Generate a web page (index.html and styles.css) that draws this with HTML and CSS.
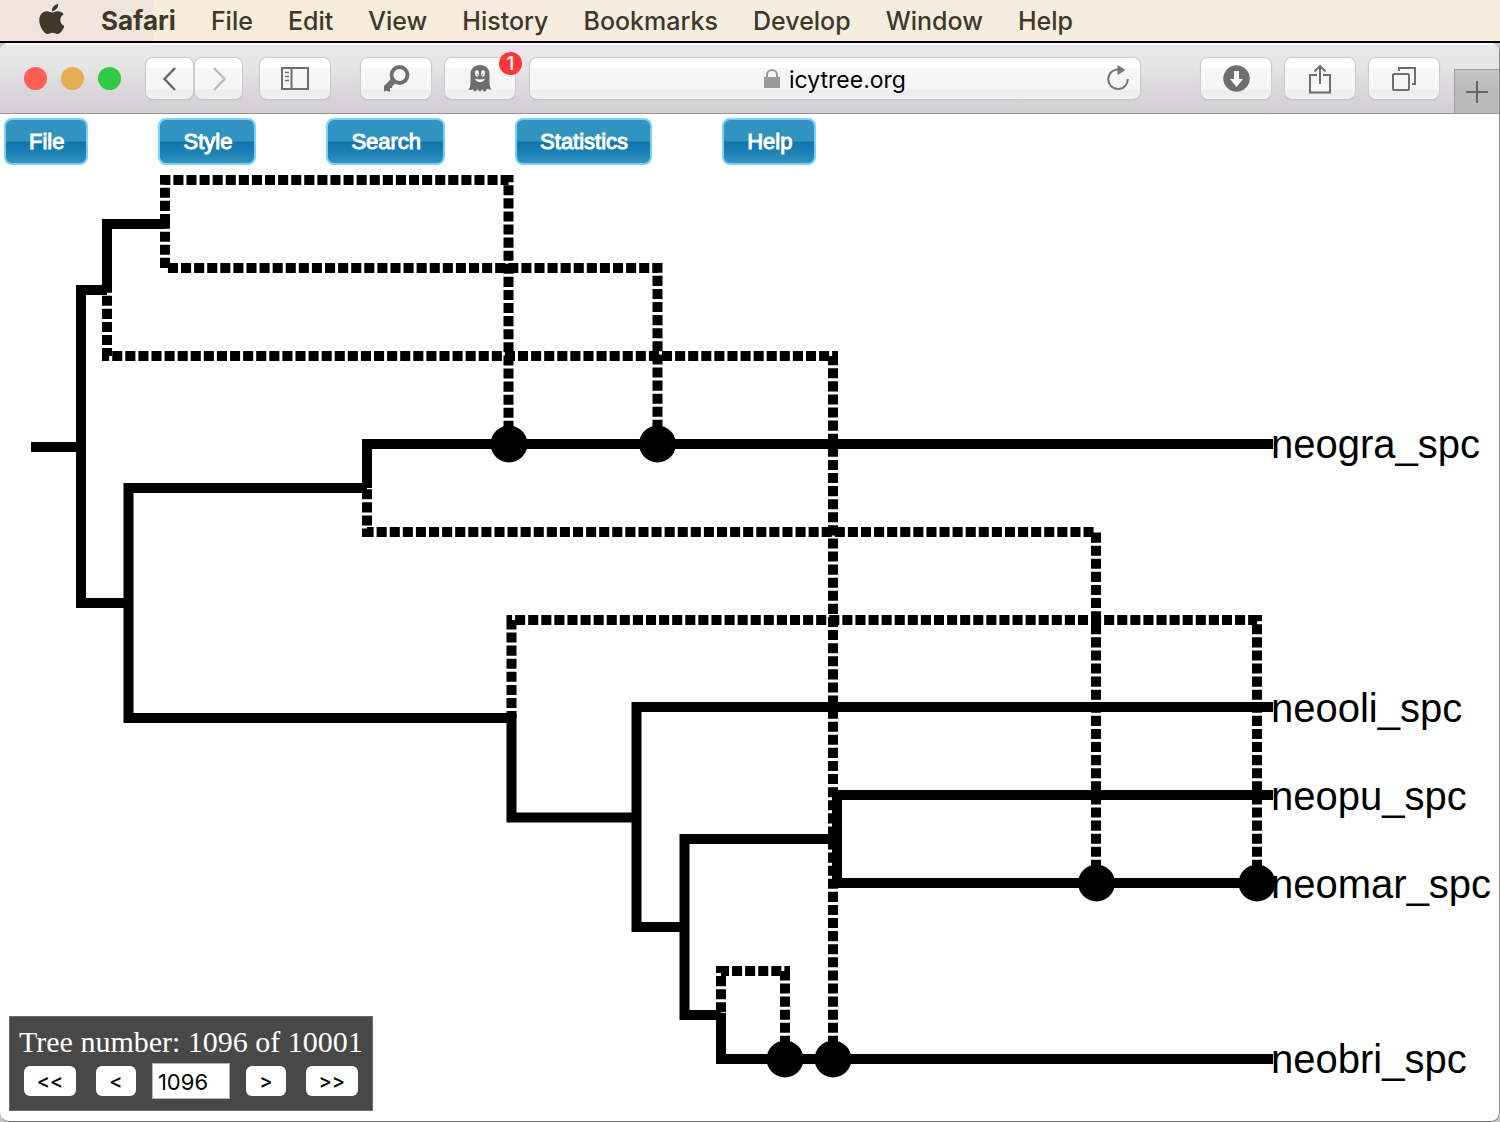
FILE: index.html
```html
<!DOCTYPE html>
<html lang="en">
<head>
<meta charset="utf-8">
<title>IcyTree</title>
<link rel="stylesheet" href="styles.css">
</head>
<body>
<nav class="menubar" aria-label="System menu">
  <svg class="apple" viewBox="4 32 365 448" aria-hidden="true"><path d="M318.7 268.7c-.2-36.7 16.4-64.4 50-84.8-18.8-26.9-47.2-41.7-84.7-44.6-35.5-2.8-74.3 20.7-88.5 20.7-15 0-49.4-19.7-76.4-19.7C63.3 141.2 4 184.8 4 273.5q0 39.3 14.4 81.2c12.8 36.7 59 126.7 107.2 125.2 25.2-.6 43-17.9 75.8-17.9 31.8 0 48.3 17.9 76.4 17.9 48.6-.7 90.4-82.5 102.6-119.3-65.2-30.7-61.7-90-61.7-91.9zm-56.6-164.2c27.3-32.4 24.8-61.9 24-72.5-24.1 1.4-52 16.4-67.9 34.9-17.5 19.8-27.8 44.3-25.6 71.9 26.1 2 49.9-11.4 69.5-34.3z"/></svg>
  <a class="app" href="#">Safari</a>
  <a href="#">File</a>
  <a href="#">Edit</a>
  <a href="#">View</a>
  <a href="#">History</a>
  <a href="#">Bookmarks</a>
  <a href="#">Develop</a>
  <a href="#">Window</a>
  <a href="#">Help</a>
</nav>
<div class="window">
  <header class="toolbar">
    <div class="lights"><span class="light red"></span><span class="light amber"></span><span class="light green"></span></div>
    <div class="history">
      <button class="tool nav" aria-label="Back"><svg width="46" height="40" viewBox="0 0 46 40"><path d="M28 9 17.500 20 28 31" fill="none" stroke="#6a6a6a" stroke-width="2.500"/></svg></button>
      <button class="tool nav" aria-label="Forward"><svg width="46" height="40" viewBox="0 0 46 40"><path d="M18 9 28.500 20 18 31" fill="none" stroke="#bdbdbd" stroke-width="2.500"/></svg></button>
    </div>
    <button class="tool sidebar" aria-label="Sidebar"><svg width="28" height="23" viewBox="0 0 28 23" fill="none" stroke="#6c6f6c" stroke-width="2"><path d="M1 1h26v21H1zM10.500 1v21"/><path d="M4 5.500h4M4 9.500h4M4 13.500h4" stroke-width="1.500"/></svg></button>
    <button class="tool key" aria-label="Passwords"><svg width="27" height="27" viewBox="0 0 27 27"><circle cx="16.500" cy="10" r="8" fill="none" stroke="#6f6f6f" stroke-width="3.800"/><path d="M9 13 13.500 17.500 9.500 21 9 23H7v3.500H5L4 25.500 1 26.500 1 21z" fill="#6f6f6f"/></svg></button>
    <button class="tool ghost" aria-label="Ghostery, 1 alert"><svg width="24" height="27" viewBox="0 0 24 27"><path d="M2.500 18V9C2.500 3.500 6.500 0 12 0s9.500 3.500 9.500 9v9c0 3 .8 4.500 1.800 6.500-2 .3-3-.2-4-.8-.8 1.500-1.700 2.700-3.200 2.800-.9-.6-1.500-1.500-2-2.500-.7 1.300-1.200 2.300-2.300 2.500-1.200-.7-1.700-1.500-2-2.500-1 1.500-2 2.300-3.500 2.300-.9-.8-1.200-1.500-1.500-2.300-1 .7-2.300 1.200-4.300 1C1.700 23 2.500 21 2.500 18z" fill="#6c6f6c"/><ellipse cx="9" cy="8.500" rx="1.900" ry="3.200" fill="#fff"/><ellipse cx="15" cy="8.500" rx="1.900" ry="3.200" fill="#fff"/><circle cx="9.500" cy="9.500" r=".7" fill="#6c6f6c"/><circle cx="14.500" cy="9.500" r=".7" fill="#6c6f6c"/><path d="M7 13.500q5 2 10 0-1 3.500-5 3.500t-5-3.500z" fill="#fff"/></svg><span class="badge">1</span></button>
    <div class="address">
      <svg width="16" height="20" viewBox="0 0 16 20" aria-hidden="true"><path d="M3 9V6a5 5 0 0 1 10 0v3" fill="none" stroke="#9b9b9b" stroke-width="2"/><path d="M0 8h16v11H0z" fill="#9b9b9b"/></svg>
      <span class="url">icytree.org</span>
      <button class="reload" aria-label="Reload"><svg width="22" height="26" viewBox="0 0 22 26"><path d="M12 4.500A9.800 9.800 0 1 0 20.800 14" fill="none" stroke="#747474" stroke-width="2"/><path d="M10.500 0l8 5-8 5z" fill="#747474"/></svg></button>
    </div>
    <div class="actions">
      <button class="tool" aria-label="Downloads"><svg width="27" height="27" viewBox="0 0 27 27"><circle cx="13.500" cy="13.500" r="13.200" fill="#6c6f6c"/><path d="M11 6h5v8h4l-6.500 8L7 14h4z" fill="#fff"/></svg></button>
      <button class="tool" aria-label="Share"><svg width="22" height="30" viewBox="0 0 22 30" fill="none" stroke="#6c6f6c" stroke-width="2"><path d="M8 11H1v17.500h20V11h-7M11 20V2M5.500 7.500 11 2l5.500 5.500"/></svg></button>
      <button class="tool" aria-label="Tabs"><svg width="24" height="24" viewBox="0 0 24 24" fill="none" stroke="#6c6f6c" stroke-width="2"><rect x="1" y="7" width="16" height="16" rx="1"/><path d="M7 4V1h16v16h-3"/></svg></button>
    </div>
    <button class="newtab" aria-label="New tab"><svg width="22" height="22" viewBox="0 0 22 22"><path d="M11 0v22M0 11h22" stroke="#666" stroke-width="2"/></svg></button>
  </header>
  <main class="page">
    <div class="menu">
      <button>File</button>
      <button>Style</button>
      <button>Search</button>
      <button>Statistics</button>
      <button>Help</button>
    </div>
    <svg class="tree" viewBox="0 166 1499 955" role="img" aria-label="Phylogenetic network">
      <g class="edges">
        <path d="M31 447H81M107 290H81V603H128M165 224H107V292M367 488H128.500V718H511M1273 444H367V488M511.500 713V817.500H637M1273 707H636.500V927H685M837 839H684.500V1015H721M1273 795H837V883H1257M721 1013V1059H1273"/>
      </g>
      <g class="edges reticulate">
        <path d="M508.500 444V180H165V224"/>
        <path d="M657.500 443V268H165V219"/>
        <path d="M833 1059V356H107V290"/>
        <path d="M1096 883V532H367V488"/>
        <path d="M1257 883V620H511.500V718"/>
        <path d="M785 1059V971H721V1015"/>
      </g>
      <g>
        <circle cx="509" cy="444" r="18.500"/><circle cx="657.500" cy="444" r="18.500"/>
        <circle cx="1096.500" cy="883" r="18.500"/><circle cx="1257" cy="883" r="18.500"/>
        <circle cx="785" cy="1059" r="18.500"/><circle cx="833" cy="1059" r="18.500"/>
      </g>
      <g class="leaf">
        <text x="1271" y="458">neogra_spc</text>
        <text x="1271" y="722">neooli_spc</text>
        <text x="1271" y="810">neopu_spc</text>
        <text x="1271" y="898">neomar_spc</text>
        <text x="1271" y="1073">neobri_spc</text>
      </g>
    </svg>
    <form class="picker">
      <label for="tree-number">Tree number: 1096 of 10001</label>
      <div class="steps">
        <button type="button">&lt;&lt;</button>
        <button type="button">&lt;</button>
        <input id="tree-number" type="text" value="1096">
        <button type="button">&gt;</button>
        <button type="button">&gt;&gt;</button>
      </div>
    </form>
  </main>
</div>
</body>
</html>
```
FILE: styles.css
```css
* { box-sizing: border-box; }
body {
  margin: 0;
  min-height: 100vh;
  display: flex;
  flex-direction: column;
  background: #c9c7c9;
  font-family: Inter, "Liberation Sans", sans-serif;
}
button { margin: 0; padding: 0; border: 0; font: inherit; color: inherit; }
svg { display: block; }

.menubar {
  display: flex;
  align-items: center;
  gap: 35px;
  height: 43px;
  padding-left: 39px;
  border-bottom: 2px solid #000;
  background: linear-gradient(90deg, #efe5dd 153px, #f5ecda 153px, #f6ede1 600px);
  color: #40372b;
  font-size: 25px;
  font-weight: 500;
  line-height: 40px;
}
.menubar a { color: inherit; text-decoration: none; }
.menubar .app { margin-left: 2px; font-size: 26px; font-weight: 700; }
.apple { width: 25px; height: 30px; margin-top: -4px; fill: #40372b; }

.window {
  flex: 1;
  display: flex;
  flex-direction: column;
  border-right: 1px solid #8d8d8d;
  border-bottom: 1px solid #6f6f6f;
  border-radius: 9px;
  overflow: hidden;
  background: #fff;
}

.toolbar {
  display: flex;
  align-items: center;
  height: 71px;
  padding: 1px 0 0 24px;
  border-bottom: 1px solid #98949a;
  background: linear-gradient(#fff 1px, #ece4ee 2px, #ece5ed 8px, #e7e7e7 9px, #e5e5e5 26px, #dddbdd 38px, #d6d3d7 60px, #d3cfd4);
}
.lights { display: flex; gap: 14px; }
.light { width: 23px; height: 23px; border-radius: 50%; }
.red { background: #ff5f57; }
.amber { background: #e5ad56; }
.green { background: #2fca46; }

.tool {
  position: relative;
  display: flex;
  align-items: center;
  justify-content: center;
  flex: none;
  width: 70px;
  height: 41px;
  border-radius: 7px;
  background: linear-gradient(#fff 25%, #f7f7f7 25%, #f6f6f6 76%, #eee 78%);
  box-shadow: 0 0 1px 1px #cdcacf, 0 1px 1px #aaa;
}
.history { display: flex; gap: 2px; margin-left: 25px; }
.nav { width: 47px; }
.sidebar { margin-left: 18px; }
.key { margin-left: 31px; }
.ghost { margin-left: 14px; }
.badge {
  position: absolute;
  top: -6px;
  right: -7px;
  width: 23px;
  height: 23px;
  border-radius: 50%;
  background: #ff3735;
  color: #fff;
  font-size: 19px;
  font-weight: 500;
  line-height: 23px;
  text-align: center;
}
.address {
  position: relative;
  flex: 1;
  display: flex;
  align-items: center;
  justify-content: center;
  gap: 9px;
  height: 41px;
  margin-left: 15px;
  border-radius: 7px;
  background: linear-gradient(#fff 25%, #f7f7f7 25%, #f6f6f6 76%, #eee 78%);
  box-shadow: 0 0 1px 1px #cdcacf, 0 1px 1px #aaa;
  font-size: 23px;
  line-height: 42px;
}
.url { padding-top: 2px; }
.reload { position: absolute; right: 11px; top: 7px; background: none; }
.actions { display: flex; gap: 14px; margin: 0 15px 0 61px; }
.newtab {
  align-self: flex-end;
  display: flex;
  align-items: center;
  justify-content: center;
  width: 45px;
  height: 44px;
  border: 1px solid #9d9a9f;
  border-width: 1px 0 0 1px;
  background: linear-gradient(#c9c5ca, #bcbcbc 40%, #bababa);
}

.page { position: relative; flex: 1; display: flex; flex-direction: column; }
.menu { display: flex; gap: 70px; padding: 4px 4px 1px; }
.menu button {
  height: 47px;
  padding: 1px 22px 0 23px;
  border: 2px solid #79d3f8;
  border-radius: 8px;
  background: linear-gradient(#3394c1, #3093c0 48%, #0f75ad 52%, #1b80b5 74%, #3591bf);
  color: #fff;
  font-family: "Liberation Sans", Arial, sans-serif;
  font-size: 22px;
  line-height: 42px;
  -webkit-text-stroke: 1px #fff;
}

.tree { width: 100%; }
.edges { fill: none; stroke: #000; stroke-width: 10; }
.reticulate { stroke-dasharray: 10.070 3.020; }
.leaf { font-family: "Liberation Sans", Arial, sans-serif; font-size: 40px; }

.picker {
  position: absolute;
  left: 9px;
  bottom: 10px;
  padding: 7px 9px 11px;
  border: 1px solid #6b6b6b;
  background: #484848;
}
.picker label {
  display: block;
  color: #fff;
  font-family: "Liberation Serif", "Times New Roman", serif;
  font-size: 30px;
  line-height: 36px;
}
.steps { display: flex; align-items: center; justify-content: space-between; padding: 0 5px; margin-top: 3px; }
.steps button {
  width: 40px;
  height: 30px;
  border-radius: 6px;
  background: #fff;
  color: #000;
  font-size: 20px;
  font-weight: 500;
  line-height: 30px;
}
.steps button:first-child, .steps button:last-child { width: 52px; }
.steps input {
  width: 78px;
  height: 36px;
  margin: 0 -4px;
  padding: 2px 5px 0;
  border: 1px solid #b5b5b5;
  background: #fff;
  font: 22px/32px Inter, sans-serif;
}
```
